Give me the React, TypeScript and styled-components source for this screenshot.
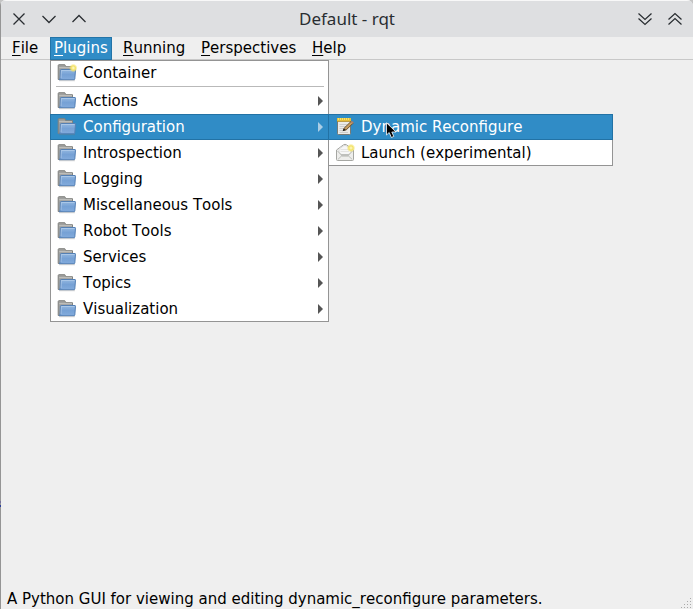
import React from 'react';
import styled, { createGlobalStyle } from 'styled-components';

const GlobalStyle = createGlobalStyle`
  * { box-sizing: border-box; }
  html, body { margin: 0; padding: 0; overflow: hidden; background: #c4c4c4; }
`;

const Window = styled.div`
  width: 693px;
  height: 609px;
  display: flex;
  flex-direction: column;
  padding-left: 1px;
  background:
    linear-gradient(#959595 501px, #77719c 501px 503px, #959595 503px 505px, #2b3f9c 505px 507px, #959595 507px) 0 0 / 1px 100% no-repeat,
    #efefef;
  border-radius: 6px 6px 0 0;
  overflow: hidden;
  color: #000;
  font: 15px/20px 'DejaVu Sans', sans-serif;
  font-kerning: none;
`;

const TitleBar = styled.header`
  height: 37px;
  flex: none;
  display: grid;
  grid-template-columns: 1fr auto 1fr;
  align-items: center;
  padding: 0 8px 1px;
  background: #dedfe1;
  border-top: 1px solid #f8f8f8;
`;

const ButtonGroup = styled.div<{ $end?: boolean }>`
  display: flex;
  gap: 10px;
  justify-content: ${p => (p.$end ? 'flex-end' : 'flex-start')};
`;

const WindowButton = styled.button`
  width: 20px;
  height: 20px;
  padding: 0;
  border: 0;
  background: none;
  svg { display: block; fill: none; stroke: #292d31; stroke-width: 1.25; }
`;

const Title = styled.h1`
  margin: 0;
  font: 400 17px/22px 'Noto Sans', sans-serif;
  color: #292d31;
`;

const MenuBar = styled.nav`
  height: 23px;
  flex: none;
  display: flex;
  padding-left: 7px;
  border-bottom: 1px solid #c8c8c8;
`;

const MenuTitle = styled.div<{ $w: number; $active?: boolean }>`
  position: relative;
  width: ${p => p.$w}px;
  height: 23px;
  padding-left: 4px;
  line-height: 23px;
  white-space: nowrap;
  color: ${p => (p.$active ? '#fff' : '#000')};
  background: ${p => (p.$active ? '#308cc6' : 'transparent')};
  box-shadow: ${p => (p.$active ? 'inset 0 0 0 1px #2374a8' : 'none')};
`;

const ActiveTitle = styled(MenuTitle)`
  margin-right: 7px;
`;

const Mnemonic = styled.span`
  text-decoration: underline;
  text-decoration-thickness: 1px;
  text-underline-offset: 2px;
`;

const Popup = styled.div<{ $w: number; $x: number; $y: number }>`
  position: absolute;
  z-index: 2;
  left: ${p => p.$x}px;
  top: ${p => p.$y}px;
  width: ${p => p.$w}px;
  background: #fff;
  color: #000;
  line-height: 20px;
  &::before {
    content: '';
    position: absolute;
    inset: 0;
    border: 1px solid #949494;
    pointer-events: none;
  }
`;

const MenuItem = styled.div<{ $active?: boolean }>`
  position: relative;
  display: flex;
  align-items: center;
  gap: 6px;
  height: 26px;
  padding: 0 6px 0 7px;
  color: ${p => (p.$active ? '#fff' : '#000')};
  background: ${p => (p.$active ? '#308cc6' : 'transparent')};
  box-shadow: ${p => (p.$active ? 'inset 0 0 0 1px #2272a5' : 'none')};
  svg { flex: none; }
`;

const Label = styled.span`
  flex: 1;
  white-space: nowrap;
`;

const Separator = styled.div`
  height: 2px;
  margin: 0 5px 0 6px;
  border-top: 1px solid #b9b9b9;
`;

const Workspace = styled.main`
  flex: 1;
`;

const StatusBar = styled.footer`
  height: 21px;
  flex: none;
  display: flex;
  justify-content: space-between;
  align-items: flex-end;
  padding-left: 6px;
  span { line-height: 20px; white-space: nowrap; }
  svg { display: block; }
`;

const Pointer = styled.svg`
  position: absolute;
  z-index: 4;
  left: 58px;
  top: 8px;
`;

const FolderIcon = ({ fresh = false }: { fresh?: boolean }) => (
  <svg width="20" height="20" viewBox="0 0 20 20">
    <defs>
      <linearGradient id="folderFront" x1="0" y1="0" x2="0" y2="1">
        <stop offset="0" stopColor="#94b8e0" />
        <stop offset=".5" stopColor="#76a1d5" />
        <stop offset="1" stopColor="#82abdc" />
      </linearGradient>
      <radialGradient id="spark">
        <stop offset="0" stopColor="#fffbd0" />
        <stop offset=".5" stopColor="#f3e266" />
        <stop offset="1" stopColor="#f3e266" stopOpacity="0" />
      </radialGradient>
    </defs>
    <path d="M1.2 16.5V2.5Q1.2 1.7 2 1.7H7.8L8.8 3.7H15.5V13L4 16.5Z" fill="#a0a19f" stroke="#80827e" />
    <path d="M2.2 4.7H15" stroke="#c4c4c1" />
    <path d="M4.2 6.5H18Q18.5 6.5 18.5 7.2L17.8 16Q17.7 16.7 17 16.7H2.2Q3 16.2 3.1 15L3.4 7.3Q3.5 6.5 4.2 6.5Z" fill="url(#folderFront)" stroke="#5480b5" />
    <path d="M4 15L4.4 7.5H17.4" fill="none" stroke="#bdd4ee" strokeOpacity=".6" />
    <path d="M2 17.7H18" stroke="#777" strokeOpacity=".35" />
    {fresh && <circle cx="16.3" cy="5" r="4.3" fill="url(#spark)" />}
  </svg>
);

const EditorIcon = () => (
  <svg width="20" height="20" viewBox="0 0 20 20">
    <rect x="2.5" y="2.5" width="13" height="15" rx="1" fill="#ebebe8" stroke="#777a74" />
    <path d="M4.5 7.5H12M4.5 9.5H11M4.5 11.5H9M4.5 13.5H7M4.5 15.5H13" stroke="#cdcdca" />
    <rect x="2" y="1" width="14" height="3.5" fill="#e6c03b" />
    <path d="M3.5 1V3M5.5 1V3M7.5 1V3M9.5 1V3M11.5 1V3M13.5 1V3" stroke="#f7e36b" />
    <path d="M2 4.5H16" stroke="#aa8428" strokeOpacity=".7" />
    <path d="M8.2 13.5L9.1 11.2L16.2 4.3L18.3 6L11.2 12.9Z" fill="#c69c60" stroke="#5f4928" strokeWidth=".9" />
    <path d="M15.5 5L16.8 3.7L18.8 5.4L17.6 6.7Z" fill="#a98272" />
    <path d="M7.5 14.3L8.9 11.5L10.8 13Z" fill="#222" />
  </svg>
);

const MailIcon = () => (
  <svg width="20" height="20" viewBox="0 0 20 20">
    <path d="M1.5 7L8.5 1.8Q10 .8 11.5 1.8L18.5 7V16.5Q18.5 17.5 17.5 17.5H2.5Q1.5 17.5 1.5 16.5Z" fill="#eeeeec" stroke="#a6a7a3" />
    <path d="M4 6L8.7 2.8Q10 2 11.3 2.8L16 6V10L14 12H6L4 10Z" fill="#f7f7f7" stroke="#dcdcda" />
    <path d="M5.5 6.5H14M5.5 8.5H14" stroke="#e4e4e2" />
    <path d="M2.5 8L6 11.5H14L17.5 8M2.8 16.5L6.5 13H13.5L17.3 16.5" fill="none" stroke="#bdbfba" />
    <path d="M5 10.5Q10 12.5 15 10.5L13.5 13.3H6.5Z" fill="#bfc0bd" />
    <circle cx="16" cy="5" r="4.3" fill="url(#spark)" />
  </svg>
);

const Arrow = ({ active = false }: { active?: boolean }) => (
  <svg width="5" height="10" viewBox="0 0 5 10">
    <path d="M0 0L5 5L0 10Z" fill={active ? '#aacde5' : '#555'} />
  </svg>
);

const Glyph = ({ d }: { d: string }) => (
  <WindowButton>
    <svg width="20" height="20" viewBox="0 0 20 20"><path d={d} /></svg>
  </WindowButton>
);

const groups = ['Actions', 'Configuration', 'Introspection', 'Logging', 'Miscellaneous Tools', 'Robot Tools', 'Services', 'Topics', 'Visualization'];

const menus = [
  { name: 'File', width: 42 },
  { name: 'Plugins', width: 62 },
  { name: 'Running', width: 78 },
  { name: 'Perspectives', width: 111 },
  { name: 'Help', width: 44 },
];

const PluginsMenu = () => (
  <Popup $w={279} $x={0} $y={23}>
    <MenuItem><FolderIcon fresh /><Label>Container</Label></MenuItem>
    <Separator />
    {groups.map(name => {
      const active = name === 'Configuration';
      return (
        <MenuItem key={name} $active={active}>
          <FolderIcon /><Label>{name}</Label><Arrow active={active} />
          {active && (
            <Popup $w={285} $x={278} $y={0}>
              <MenuItem $active><EditorIcon /><Label>Dynamic Reconfigure</Label></MenuItem>
              <MenuItem><MailIcon /><Label>Launch (experimental)</Label></MenuItem>
              <Pointer width="12" height="18" viewBox="0 0 12 18">
                <path d="M.5 .8V13L3.2 10.5L5.4 15.5L7.8 14.4L5.8 10H10Z" fill="#000" stroke="#fff" strokeWidth=".8" />
              </Pointer>
            </Popup>
          )}
        </MenuItem>
      );
    })}
  </Popup>
);

export default function App() {
  return (
    <>
      <GlobalStyle />
      <Window>
        <TitleBar>
          <ButtonGroup>
            <Glyph d="M4.5 4.5L15.5 15.5M15.5 4.5L4.5 15.5" />
            <Glyph d="M3.5 7L10 13.5L16.5 7" />
            <Glyph d="M3.5 13L10 6.5L16.5 13" />
          </ButtonGroup>
          <Title>Default - rqt</Title>
          <ButtonGroup $end>
            <Glyph d="M3.5 4.5L10 10.5L16.5 4.5M3.5 9.5L10 15.5L16.5 9.5" />
            <Glyph d="M3.5 10.5L10 4.5L16.5 10.5M3.5 15.5L10 9.5L16.5 15.5" />
          </ButtonGroup>
        </TitleBar>
        <MenuBar>
          {menus.map(({ name, width }) => {
            const content = <><Mnemonic>{name[0]}</Mnemonic>{name.slice(1)}</>;
            return name === 'Plugins' ? (
              <ActiveTitle key={name} $w={width} $active>{content}<PluginsMenu /></ActiveTitle>
            ) : (
              <MenuTitle key={name} $w={width}>{content}</MenuTitle>
            );
          })}
        </MenuBar>
        <Workspace />
        <StatusBar>
          <span>A Python GUI for viewing and editing dynamic_reconfigure parameters.</span>
          <svg width="13" height="13" viewBox="0 0 13 13">
            <path d="M10 2h1v1h-1zM7 5h1v1h-1zM10 5h1v1h-1zM4 8h1v1h-1zM7 8h1v1h-1zM10 8h1v1h-1zM1 11h1v1h-1zM4 11h1v1h-1zM7 11h1v1h-1zM10 11h1v1h-1z" fill="#aaa" />
          </svg>
        </StatusBar>
      </Window>
    </>
  );
}
